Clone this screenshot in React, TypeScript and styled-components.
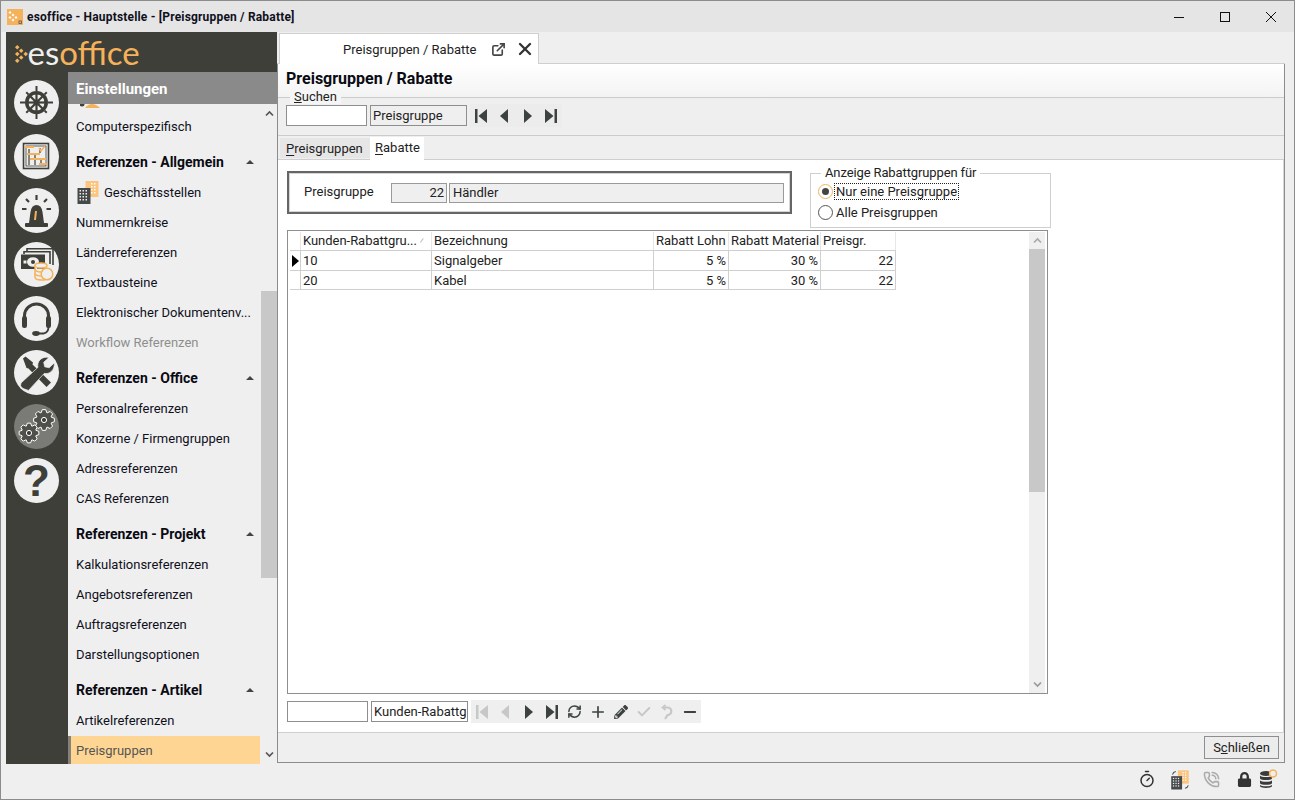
import React from "react";
import styled, { createGlobalStyle } from "styled-components";
import { ExternalLink, X, RefreshCw, Plus, Check, Minus, PhoneCall, Timer } from "lucide-react";
import { FaLock, FaPencilAlt } from "react-icons/fa";

const DARK = "#3f3f39";
const ICON = "#3c4240";
const ORANGE = "#f5b25a";

const Global = createGlobalStyle`
  html, body { margin: 0; padding: 0; background: #efefef; }
  body { font-family: Roboto, "Liberation Sans", sans-serif; font-size: 13px; color: #10101c; }
  * { box-sizing: border-box; }
`;

const Window = styled.div`
  width: 1295px; height: 800px; border: 1px solid #8c8c8c; display: flex; flex-direction: column; background: #efefef; overflow: hidden;
`;
const TitleBar = styled.div`
  height: 31px; flex: none; background: #e5e5e5; display: flex; align-items: center; padding-left: 6px;
`;
const TitleText = styled.span`
  margin-left: 4px; font-size: 12px; font-weight: 700; color: #10101c; flex: 1; letter-spacing: 0.18px;
`;
const WinControl = styled.div`
  width: 46px; height: 31px; display: flex; align-items: center; justify-content: center;
`;
const Body = styled.div`
  flex: 1; min-height: 0; display: flex; padding: 0 9px 0 5px;
`;
const LeftBlock = styled.div`
  width: 271px; flex: none; display: flex; flex-direction: column; background: ${DARK};
`;
const LogoRow = styled.div`
  height: 40px; flex: none; display: flex; align-items: center; padding: 3px 0 0 9px;
`;
const LogoWord = styled.span`
  font-family: Lato, Roboto, sans-serif; font-weight: 400; font-size: 33px; line-height: 36px; margin: -4px 0 0 -1px; color: #f0f0f0;
`;
const LogoAccent = styled.span`color: ${ORANGE};`;
const LeftMain = styled.div`flex: 1; min-height: 0; display: flex;`;
const Rail = styled.div`
  width: 62px; flex: none; padding: 8px 0 0 8px; display: flex; flex-direction: column; gap: 9px;
`;
const RailButton = styled.div<{ $active?: boolean }>`
  width: 45px; height: 45px; border-radius: 50%; background: ${p => (p.$active ? "#7a7a76" : "#efefef")};
  display: flex; align-items: center; justify-content: center;
`;
const QuestionGlyph = styled.span`
  font-family: "Liberation Sans", sans-serif; font-weight: 700; font-size: 44px; line-height: 45px; color: ${DARK};
`;
const NavColumn = styled.div`flex: 1; min-width: 0; display: flex; flex-direction: column;`;
const NavHeading = styled.div`
  height: 32px; flex: none; background: #8a8a8a; color: #fff; font-size: 15px; font-weight: 700; line-height: 35px; padding-left: 8px;
`;
const NavBody = styled.div`flex: 1; min-height: 0; display: flex; background: #efefef;`;
const NavList = styled.div`width: 192px; flex: none; overflow: hidden;`;
const NavStub = styled.div`height: 8px; padding-left: 12px; overflow: hidden; display: flex; align-items: flex-start;`;
const NavItem = styled.div<{ $selected?: boolean; $disabled?: boolean }>`
  height: 30px; display: flex; align-items: center; white-space: nowrap; padding: 0 0 2px ${p => (p.$selected ? 5 : 8)}px;
  color: ${p => (p.$selected ? "#555" : p.$disabled ? "#8e8e8e" : "#10101c")};
  background: ${p => (p.$selected ? "#fed593" : "transparent")};
  border-left: ${p => (p.$selected ? "3px solid #85827c" : "0")};
`;
const NavIconItem = styled(NavItem)`padding-left: 8px; gap: 4px;`;
const NavGroup = styled.div`
  height: 36px; display: flex; align-items: center; justify-content: space-between; padding: 4px 6px 0 8px; font-size: 14px; font-weight: 700; color: #0a0a12;
`;
const Caret = styled.span`
  width: 0; height: 0; border-left: 4px solid transparent; border-right: 4px solid transparent; border-bottom: 4px solid #444;
`;
const SideScroll = styled.div`
  flex: 1; margin-left: 1px; display: flex; flex-direction: column; align-items: center;
`;
const SideScrollButton = styled.div`height: 19px; flex: none; display: flex; align-items: center; justify-content: center; width: 100%;`;
const SideSpacer = styled.div<{ $h: number }>`height: ${p => p.$h}px; flex: none;`;
const SideThumb = styled.div`height: 287px; width: 100%; flex: none; background: #c8c8c8;`;
const SideFill = styled.div`flex: 1;`;

const Main = styled.div`width: 1008px; flex: none; display: flex; flex-direction: column;`;
const TabStrip = styled.div`height: 32px; flex: none; padding: 1px 0 0 2px; display: flex; border-bottom: 1px solid #cfcfcf;`;
const DocTab = styled.div`
  width: 260px; margin-bottom: -1px; background: #fff; border: 1px solid #cfcfcf; border-bottom: 0; display: flex; align-items: center; padding: 0 8px 0 63px; gap: 16px; color: #222;
`;
const DocTabLabel = styled.span`width: 132px; white-space: nowrap;`;
const DocTabIcons = styled.span`display: flex; align-items: center; gap: 9px;`;
const Panel = styled.div`
  flex: 1; min-height: 0; margin-bottom: 1px; border: 1px solid #8c8c8c; border-top: 0; display: flex; flex-direction: column; background: #efefef;
`;
const PageTitle = styled.div`
  height: 33px; flex: none; background: linear-gradient(#fff, #f3f3f3); padding: 4px 0 0 8px; font-size: 16px; font-weight: 700; color: #0a0a12; line-height: 22px;
`;
const SearchGroup = styled.div`
  height: 39px; flex: none; position: relative; border-top: 1px solid #cccccc; border-bottom: 1px solid #cccccc; display: flex; align-items: flex-start; padding: 7px 0 0 8px; gap: 3px;
`;
const Legend = styled.span<{ $left: number; $top: number; $bg?: string; $tight?: boolean }>`
  position: absolute; left: ${p => p.$left}px; top: ${p => p.$top}px; padding: 0 4px; line-height: 14px; background: ${p => p.$bg ?? "#f5f5f5"}; color: #222;
  letter-spacing: ${p => (p.$tight ? "-0.12px" : "0")};
`;
const TextBox = styled.div<{ $w: number; $grey?: boolean }>`
  width: ${p => p.$w}px; height: 21px; flex: none; border: 1px solid #8e8e8e; background: ${p => (p.$grey ? "#efefef" : "#fff")};
  line-height: 19px; padding: 0 2px; overflow: hidden; white-space: nowrap; color: #222;
`;
const NavBar = styled.div`height: 23px; margin-top: -1px; display: flex; background: #ececec; flex: none;`;
const NavCell = styled.div`width: 23px; height: 23px; display: flex; align-items: center; justify-content: center;`;
const InnerTabs = styled.div`height: 24px; flex: none; display: flex; align-items: flex-end; padding-left: 2px; border-bottom: 1px solid #cfcfcf;`;
const InnerTab = styled.div<{ $active?: boolean }>`
  height: ${p => (p.$active ? 23 : 20)}px; padding: ${p => (p.$active ? "0 5px 3px 5px" : "0 6px 0 6px")};
  width: ${p => (p.$active ? 54 : 90)}px;
  background: ${p => (p.$active ? "#fff" : "#e6e6e6")}; color: #222; display: flex; align-items: center; white-space: nowrap; margin-bottom: ${p => (p.$active ? -1 : 1)}px;
  & > span > u { text-underline-offset: 2px; }
`;
const Sheet = styled.div`
  flex: 1; min-height: 0; background: #fff; padding: 11px 0 0 9px; display: flex; flex-direction: column; border-right: 1px solid #d8d8d8; border-bottom: 1px solid #cfcfcf;
`;
const TopRow = styled.div`height: 59px; flex: none; display: flex; align-items: flex-start; position: relative;`;
const PriceBox = styled.div`
  width: 505px; height: 43px; border: 2px solid #666; box-shadow: inset 0 0 0 1px #d5d5d5; display: flex; align-items: center; gap: 2px; padding: 1px 6px 0 15px;
`;
const PriceLabel = styled.span`width: 85px; flex: none; color: #222; margin-top: -3px;`;
const ReadOnlyField = styled.div<{ $w?: number; $right?: boolean }>`
  ${p => (p.$w ? `width: ${p.$w}px; flex: none;` : "flex: 1;")} height: 20px; border: 1px solid #9a9a9a; background: #efefef; line-height: 18px; padding: 0 2px 0 3px;
  text-align: ${p => (p.$right ? "right" : "left")}; color: #222;
`;
const RadioGroup = styled.div`
  margin: 2px 0 0 18px; width: 241px; height: 55px; position: relative; border: 1px solid #cfcfcf; padding: 10px 0 0 7px; display: flex; flex-direction: column; gap: 6px; flex: none;
`;
const RadioRow = styled.div`height: 15px; display: flex; align-items: center; gap: 2px; color: #222;`;
const RadioDot = styled.span<{ $on?: boolean }>`
  width: 15px; height: 15px; border-radius: 50%; flex: none; background: #fff; display: flex; align-items: center; justify-content: center;
  border: 1px solid ${p => (p.$on ? ORANGE : "#555")};
  &::after { content: ""; width: 7px; height: 7px; border-radius: 50%; background: ${p => (p.$on ? "#444" : "transparent")}; }
`;
const RadioLabel = styled.span<{ $focus?: boolean }>`
  padding: 0 1px; line-height: 15px; outline: ${p => (p.$focus ? "1px dotted #222" : "none")};
`;
const Grid = styled.div`
  width: 761px; height: 464px; flex: none; border: 1px solid #8e8e8e; display: flex; padding-top: 1px;
`;
const GridBody = styled.div`width: 741px; flex: none; padding-left: 2px;`;
const GridRow = styled.div<{ $h: number }>`
  display: grid; grid-template-columns: 11px 131px 222px 75px 92px 75px; width: 606px; height: ${p => p.$h}px;
  border-bottom: 1px solid #cfcfcf;
`;
const Cell = styled.div<{ $right?: boolean; $head?: boolean }>`
  border-right: 1px solid ${p => (p.$head ? "#e6e6e6" : "#cfcfcf")}; padding: 0 2px; line-height: ${p => (p.$head ? 18 : 19)}px;
  white-space: nowrap; overflow: hidden; color: #222; display: flex; align-items: center; justify-content: ${p => (p.$right ? "flex-end" : "flex-start")};
  letter-spacing: ${p => (p.$head ? "-0.03px" : "0")};
`;
const IndicatorCell = styled(Cell)`padding: 0 0 0 2px;`;
const SortMark = styled.span`font-size: 8px; color: #777; margin-left: 3px;`;
const GridScroll = styled.div`width: 16px; flex: none; background: #efefef; display: flex; flex-direction: column; margin-right: 2px;`;
const GridThumb = styled.div`height: 243px; background: #c8c8c8; flex: none;`;
const GridScrollButton = styled.div`height: 17px; flex: none; display: flex; align-items: center; justify-content: center;`;
const BottomBar = styled.div`display: flex; align-items: center; margin-top: 6px; height: 23px; flex: none;`;
const BottomFields = styled.div`display: flex; gap: 3px; margin-right: 3px;`;
const BottomNav = styled.div`display: flex; background: #efefef; height: 23px;`;
const Footer = styled.div`height: 29px; flex: none; display: flex; justify-content: flex-end; align-items: center; padding: 0 5px 0 0;`;
const CloseButton = styled.div`
  width: 75px; height: 23px; border: 1px solid #8e8e8e; background: #ececec; display: flex; align-items: center; justify-content: center; color: #222;
`;
const StatusBar = styled.div`
  height: 35px; flex: none; display: flex; align-items: center; justify-content: flex-end; padding: 0 16px 5px 0;
`;
const StatusIcon = styled.div<{ $gap: number }>`
  width: 20px; height: 22px; margin-left: ${p => p.$gap}px; display: flex; align-items: center; justify-content: center; flex: none;
`;

const gearPath = (cx: number, cy: number, r: number) => {
  const pts: string[] = [];
  const teeth = 8;
  for (let i = 0; i < teeth; i++) {
    const a = (i / teeth) * Math.PI * 2;
    const s = Math.PI / teeth;
    const p = [
      [a - s * 0.95, r * 0.74],
      [a - s * 0.42, r],
      [a + s * 0.42, r],
      [a + s * 0.95, r * 0.74],
    ];
    p.forEach(([t, q]) => pts.push(`${(cx + q * Math.cos(t)).toFixed(2)} ${(cy + q * Math.sin(t)).toFixed(2)}`));
  }
  return `M${pts.join("L")}Z`;
};

const Diamonds = ({ size, color }: { size: number; color: string }) => (
  <svg width={size * 0.75} height={size} viewBox="0 0 12 16" fill={color}>
    {[[2, 2], [2, 8], [2, 14], [5.5, 5], [5.5, 11], [9.5, 8]].map(([x, y], i) => (
      <path key={i} d={`M${x} ${y - 2}l2 2l-2 2l-2 -2z`} />
    ))}
  </svg>
);

const WheelIcon = () => {
  const angles = [0, 45, 90, 135, 180, 225, 270, 315];
  return (
    <svg width="45" height="45" viewBox="0 0 45 45">
      <circle cx="22.5" cy="22.5" r="11.5" fill={DARK} />
      <circle cx="22.5" cy="22.5" r="8" fill="#efefef" />
      {angles.map(a => (
        <g key={a} transform={`rotate(${a} 22.5 22.5)`}>
          <line x1="22.5" y1="22.5" x2="22.5" y2="12" stroke={DARK} strokeWidth="2.2" />
          <line x1="22.5" y1="11" x2="22.5" y2={a % 90 === 0 ? 6 : 8} stroke={DARK} strokeWidth="2" />
        </g>
      ))}
      <circle cx="22.5" cy="22.5" r="3" fill={DARK} />
    </svg>
  );
};
const PlanIcon = () => (
  <svg width="45" height="45" viewBox="0 0 45 45">
    <rect x="9.5" y="9.5" width="25" height="25" fill="none" stroke={DARK} strokeWidth="1.6" />
    <rect x="12" y="12" width="20" height="20" fill="none" stroke={DARK} strokeWidth=".8" />
    <g stroke={DARK} strokeWidth="1.2"><path d="M15 15v16M21 20v11M26 14v5M27 24v7" /></g>
    <g fill={ORANGE}>
      <rect x="11" y="12" width="9" height="2" /><rect x="13" y="19" width="13" height="2" /><rect x="16" y="24" width="16" height="2" /><rect x="25" y="29" width="8" height="2" />
    </g>
    <path d="M25 14l2 3l4-5" fill="none" stroke={ORANGE} strokeWidth="1.5" />
  </svg>
);
const AlarmIcon = () => (
  <svg width="45" height="45" viewBox="0 0 45 45">
    <path d="M15 35l1.500-11q1-7 6-7t6 7l1.500 11z" fill={DARK} />
    <rect x="11" y="35" width="23" height="4" rx="1" fill={DARK} />
    <path d="M21 32l1-9" stroke={ORANGE} strokeWidth="2" />
    <g stroke={DARK} strokeWidth="2.2">
      <path d="M22.5 7v5M8 21h4.5M32.500 21h4.500M12 11l3 3M33 11l-3 3" />
    </g>
  </svg>
);
const MoneyIcon = () => (
  <svg width="45" height="45" viewBox="0 0 45 45">
    <path d="M13 9V6.800h26V23M10 12V9.800h26V22" fill="none" stroke={DARK} strokeWidth="1.600" />
    <rect x="7" y="12.500" width="24" height="14.500" fill={DARK} />
    <ellipse cx="19" cy="20" rx="6" ry="4.800" fill="#efefef" />
    <circle cx="19" cy="20" r="2" fill={DARK} />
    <rect x="9.500" y="18.500" width="3" height="3" fill="#efefef" />
    <g fill="#efefef" stroke={ORANGE} strokeWidth="1.500">
      <ellipse cx="27" cy="23.500" rx="6" ry="2.600" />
      <path d="M21 23.500v11.500q0 3 6 3h4" />
      <path d="M21 27.500q1 2.500 6 2.500M21 31.500q1 2.500 6 2.500" fill="none" />
      <circle cx="33" cy="32" r="5.800" />
    </g>
  </svg>
);
const HeadsetIcon = () => (
  <svg width="45" height="45" viewBox="0 0 45 45" fill="none">
    <path d="M10.500 23v-3.500a12 11.500 0 0 1 24 0v3.500" stroke={DARK} strokeWidth="3" />
    <rect x="8" y="20" width="5" height="12" rx="2.200" fill={DARK} />
    <rect x="32" y="20" width="5" height="12" rx="2.200" fill={DARK} />
    <path d="M34.500 31q0 5.500-5 6.500h-7" stroke={DARK} strokeWidth="1.800" />
    <ellipse cx="22" cy="37.500" rx="3.800" ry="2.400" fill={DARK} />
  </svg>
);
const ToolsIcon = () => (
  <svg width="45" height="45" viewBox="0 0 45 45">
    <path d="M9 8.500l2.500-2 7.500 6 -0.500 2 18.500 18-4.500 4.500-18-18.500-2-.5z" fill={DARK} />
    <path d="M9 38.500l-2.500-2.500 .5-3 17-15.700c-1.500-5.500 3.500-11.500 11-9.800l-5.300 4.800 1 4.500 4.500 1 5-4.900c.9 7-4.800 11.800-10 10.500l-15.700 17z" fill={DARK} stroke="#efefef" strokeWidth=".7" />
  </svg>
);
const GearsIcon = () => (
  <svg width="45" height="45" viewBox="0 0 45 45" fill="none" stroke="#fff" strokeWidth="1">
    <path d={gearPath(30, 16, 10.500)} fill="#4f4f4b" />
    <circle cx="30" cy="16" r="2.600" fill={DARK} />
    <path d={gearPath(15, 29, 10)} fill="#4f4f4b" />
    <circle cx="15" cy="29" r="2.600" fill={DARK} />
  </svg>
);
const BuildingIcon = ({ size = 24, sync }: { size?: number; sync?: boolean }) => (
  <svg width={size} height={size} viewBox="0 0 24 24">
    <rect x="9.500" y="1" width="13" height="16" fill="#fbc57f" />
    <g fill="#fff">{[3, 6, 9, 12].flatMap(y => [15, 18].map(x => <rect key={`${x}${y}`} x={x} y={y} width="1.500" height="1.500" />))}</g>
    <rect x="1.500" y="8" width="13" height="16" fill="#45494a" />
    <g fill="#efefef">{[10, 13, 16, 19].flatMap(y => [3.500, 6.500, 9.500].map(x => <rect key={`${x}${y}`} x={x} y={y} width="1.500" height="1.500" />))}</g>
    {sync && <path d="M3 6q1-3 4-3.500M22 19q-1 3-4 3.500" fill="none" stroke="#45494a" strokeWidth="1.300" />}
  </svg>
);
const UndoIcon = () => (
  <svg width="12" height="16" viewBox="0 0 12 16" fill="none" stroke="#c6c8c8" strokeWidth="2.200">
    <path d="M3 3.500h3.500a3.800 3.800 0 0 1 0 7.600L4 15" />
    <path d="M4.500 1L1.500 3.500L4.500 6" strokeWidth="1.800" />
  </svg>
);
type GlyphKind = "first" | "prev" | "next" | "last";
const glyphPaths: Record<GlyphKind, string> = {
  first: "M0 1h2.500v14H0zM12 1L3.500 8L12 15z",
  prev: "M10 1L2 8L10 15z",
  next: "M3 1L11 8L3 15z",
  last: "M1 1L9.500 8L1 15zM10.500 1H13v14h-2.500z",
};
const NavGlyph = ({ kind, off }: { kind: GlyphKind; off?: boolean }) => (
  <svg width="13" height="16" viewBox="0 0 13 16">
    <path d={glyphPaths[kind]} fill={off ? "#c6c8c8" : ICON} />
  </svg>
);
const Chevron = ({ up, color = "#555" }: { up?: boolean; color?: string }) => (
  <svg width="9" height="7" viewBox="0 0 9 7" fill="none">
    <path d={up ? "M1 5.500L4.500 2L8 5.500" : "M1 1.500L4.500 5L8 1.500"} stroke={color} strokeWidth="1.700" />
  </svg>
);
const DbIcon = () => (
  <svg width="20" height="20" viewBox="0 0 20 20">
    <g fill="#3a3a3a">
      <ellipse cx="8" cy="4.500" rx="6" ry="2.500" />
      <path d="M2 6.500c1 2 11 2 12 0v3c-1 2-11 2-12 0zM2 11.200c1 2 11 2 12 0v3c-1 2-11 2-12 0z" />
      <path d="M2 15.800c1 2 11 2 12 0v1.500c-1 2.200-11 2.200-12 0z" />
    </g>
    <circle cx="15" cy="4.500" r="3.500" fill="#efefef" stroke={ORANGE} strokeWidth="1.500" />
  </svg>
);

const Row = ({ children }: { children: React.ReactNode }) => <NavItem>{children}</NavItem>;

const Group = ({ title }: { title: string }) => (
  <NavGroup>
    {title}
    <Caret />
  </NavGroup>
);

const columns = [
  { label: "Kunden-Rabattgru...", sort: true },
  { label: "Bezeichnung" },
  { label: "Rabatt Lohn" },
  { label: "Rabatt Material" },
  { label: "Preisgr." },
];
const rows = [
  { id: "10", name: "Signalgeber", lohn: "5 %", mat: "30 %", gr: "22", current: true },
  { id: "20", name: "Kabel", lohn: "5 %", mat: "30 %", gr: "22" },
];

export default function App() {
  return (
    <>
      <Global />
      <Window>
        <TitleBar>
          <svg width="16" height="16" viewBox="0 0 16 16">
            <rect width="16" height="16" fill={ORANGE} />
            <g fill="#fff"><path d="M3 2l1.500 1.500L3 5 1.500 3.500zM3 7l1.500 1.500L3 10 1.500 8.500zM6 4.500L7.500 6 6 7.500 4.500 6zM9 7l1.500 1.500L9 10 7.500 8.500zM6 9.500L7.500 11 6 12.500 4.500 11z" /></g>
            <rect x="12" y="12" width="2.500" height="2.500" fill="none" stroke="#555" strokeWidth=".8" />
          </svg>
          <TitleText>esoffice - Hauptstelle - [Preisgruppen / Rabatte]</TitleText>
          <WinControl>
            <svg width="12" height="12" viewBox="0 0 12 12"><path d="M1 6.500h10" stroke="#111" strokeWidth="1" /></svg>
          </WinControl>
          <WinControl>
            <svg width="12" height="12" viewBox="0 0 12 12"><rect x="1.500" y="1.500" width="9" height="9" fill="none" stroke="#111" strokeWidth="1" /></svg>
          </WinControl>
          <WinControl>
            <svg width="12" height="12" viewBox="0 0 12 12"><path d="M1 1l10 10M11 1L1 11" stroke="#111" strokeWidth="1" /></svg>
          </WinControl>
        </TitleBar>
        <Body>
          <LeftBlock>
            <LogoRow>
              <Diamonds size={18} color={ORANGE} />
              <LogoWord>es<LogoAccent>office</LogoAccent></LogoWord>
            </LogoRow>
            <LeftMain>
              <Rail>
                <RailButton><WheelIcon /></RailButton>
                <RailButton><PlanIcon /></RailButton>
                <RailButton><AlarmIcon /></RailButton>
                <RailButton><MoneyIcon /></RailButton>
                <RailButton><HeadsetIcon /></RailButton>
                <RailButton><ToolsIcon /></RailButton>
                <RailButton $active><GearsIcon /></RailButton>
                <RailButton><QuestionGlyph>?</QuestionGlyph></RailButton>
              </Rail>
              <NavColumn>
                <NavHeading>Einstellungen</NavHeading>
                <NavBody>
                  <NavList>
                    <NavStub>
                      <svg width="20" height="5" viewBox="0 0 20 5">
                        <circle cx="2" cy="0" r="2.500" fill={DARK} />
                        <path d="M5 4q3-4 7-4t8 4H5z" fill={ORANGE} />
                      </svg>
                    </NavStub>
                    <Row>Computerspezifisch</Row>
                    <Group title="Referenzen - Allgemein" />
                    <NavIconItem><BuildingIcon />Geschäftsstellen</NavIconItem>
                    <Row>Nummernkreise</Row>
                    <Row>Länderreferenzen</Row>
                    <Row>Textbausteine</Row>
                    <Row>Elektronischer Dokumentenv...</Row>
                    <NavItem $disabled>Workflow Referenzen</NavItem>
                    <Group title="Referenzen - Office" />
                    <Row>Personalreferenzen</Row>
                    <Row>Konzerne / Firmengruppen</Row>
                    <Row>Adressreferenzen</Row>
                    <Row>CAS Referenzen</Row>
                    <Group title="Referenzen - Projekt" />
                    <Row>Kalkulationsreferenzen</Row>
                    <Row>Angebotsreferenzen</Row>
                    <Row>Auftragsreferenzen</Row>
                    <Row>Darstellungsoptionen</Row>
                    <Group title="Referenzen - Artikel" />
                    <Row>Artikelreferenzen</Row>
                    <NavItem $selected>Preisgruppen</NavItem>
                  </NavList>
                  <SideScroll>
                    <SideScrollButton><Chevron up /></SideScrollButton>
                    <SideSpacer $h={168} />
                    <SideThumb />
                    <SideFill />
                    <SideScrollButton><Chevron /></SideScrollButton>
                  </SideScroll>
                </NavBody>
              </NavColumn>
            </LeftMain>
          </LeftBlock>
          <Main>
            <TabStrip>
              <DocTab>
                <DocTabLabel>Preisgruppen / Rabatte</DocTabLabel>
                <DocTabIcons>
                  <ExternalLink size={15} color="#444" strokeWidth={2.6} />
                  <X size={20} color="#333" strokeWidth={2.8} />
                </DocTabIcons>
              </DocTab>
            </TabStrip>
            <Panel>
              <PageTitle>Preisgruppen / Rabatte</PageTitle>
              <SearchGroup>
                <Legend $left={12} $top={-8}><u>S</u>uchen</Legend>
                <TextBox $w={81} />
                <TextBox $w={97} $grey>Preisgruppe</TextBox>
                <NavBar>
                  <NavCell><NavGlyph kind="first" /></NavCell>
                  <NavCell><NavGlyph kind="prev" /></NavCell>
                  <NavCell><NavGlyph kind="next" /></NavCell>
                  <NavCell><NavGlyph kind="last" /></NavCell>
                </NavBar>
              </SearchGroup>
              <InnerTabs>
                <InnerTab><span><u>P</u>reisgruppen</span></InnerTab>
                <InnerTab $active><span><u>R</u>abatte</span></InnerTab>
              </InnerTabs>
              <Sheet>
                <TopRow>
                  <PriceBox>
                    <PriceLabel>Preisgruppe</PriceLabel>
                    <ReadOnlyField $w={56} $right>22</ReadOnlyField>
                    <ReadOnlyField>Händler</ReadOnlyField>
                  </PriceBox>
                  <RadioGroup>
                    <Legend $left={10} $top={-8} $bg="#fff" $tight>Anzeige Rabattgruppen für</Legend>
                    <RadioRow><RadioDot $on /><RadioLabel $focus>Nur eine Preisgruppe</RadioLabel></RadioRow>
                    <RadioRow><RadioDot /><RadioLabel>Alle Preisgruppen</RadioLabel></RadioRow>
                  </RadioGroup>
                </TopRow>
                <Grid>
                  <GridBody>
                    <GridRow $h={19}>
                      <Cell $head />
                      {columns.map(c => (
                        <Cell $head key={c.label}>{c.label}{c.sort && <SortMark>⁄</SortMark>}</Cell>
                      ))}
                    </GridRow>
                    {rows.map(r => (
                      <GridRow $h={r.current ? 20 : 19} key={r.id}>
                        <IndicatorCell>
                          {r.current && <svg width="7" height="12" viewBox="0 0 7 12"><path d="M0 0l7 6-7 6z" fill="#000" /></svg>}
                        </IndicatorCell>
                        <Cell>{r.id}</Cell>
                        <Cell>{r.name}</Cell>
                        <Cell $right>{r.lohn}</Cell>
                        <Cell $right>{r.mat}</Cell>
                        <Cell $right>{r.gr}</Cell>
                      </GridRow>
                    ))}
                  </GridBody>
                  <GridScroll>
                    <GridScrollButton><Chevron up color="#aaa" /></GridScrollButton>
                    <GridThumb />
                    <SideFill />
                    <GridScrollButton><Chevron color="#999" /></GridScrollButton>
                  </GridScroll>
                </Grid>
                <BottomBar>
                  <BottomFields>
                    <TextBox $w={81} />
                    <TextBox $w={97}>Kunden-Rabattg</TextBox>
                  </BottomFields>
                  <BottomNav>
                    <NavCell><NavGlyph kind="first" off /></NavCell>
                    <NavCell><NavGlyph kind="prev" off /></NavCell>
                    <NavCell><NavGlyph kind="next" /></NavCell>
                    <NavCell><NavGlyph kind="last" /></NavCell>
                    <NavCell><RefreshCw size={15} color={ICON} strokeWidth={2.4} /></NavCell>
                    <NavCell><Plus size={18} color={ICON} strokeWidth={2.2} /></NavCell>
                    <NavCell><FaPencilAlt size={14} color={ICON} /></NavCell>
                    <NavCell><Check size={16} color="#c6c8c8" strokeWidth={3} /></NavCell>
                    <NavCell><UndoIcon /></NavCell>
                    <NavCell><Minus size={18} color={ICON} strokeWidth={2.4} /></NavCell>
                  </BottomNav>
                </BottomBar>
              </Sheet>
              <Footer>
                <CloseButton><span>S<u>c</u>hließen</span></CloseButton>
              </Footer>
            </Panel>
          </Main>
        </Body>
        <StatusBar>
          <StatusIcon $gap={0}><Timer size={18} color="#333" strokeWidth={2} /></StatusIcon>
          <StatusIcon $gap={13}><BuildingIcon size={21} sync /></StatusIcon>
          <StatusIcon $gap={11}><PhoneCall size={17} color="#a9acac" strokeWidth={2.2} /></StatusIcon>
          <StatusIcon $gap={13}><FaLock size={15} color="#333" /></StatusIcon>
          <StatusIcon $gap={4}><DbIcon /></StatusIcon>
        </StatusBar>
      </Window>
    </>
  );
}
